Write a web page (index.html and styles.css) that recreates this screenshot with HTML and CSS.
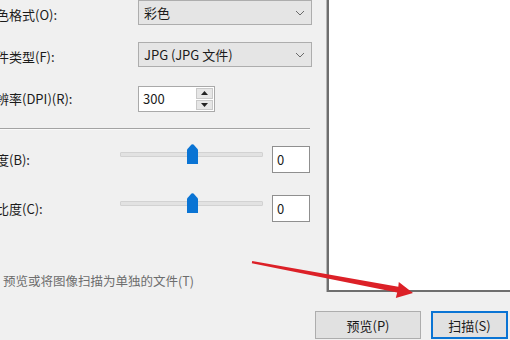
FILE: index.html
```html
<!DOCTYPE html>
<html lang="zh">
<head>
<meta charset="utf-8">
<link rel="stylesheet" href="styles.css">
</head>
<body>
<div class="dialog">
  <div class="top">
    <div class="settings">
      <div class="row r1">
        <span class="label lab-up">颜色格式(O):</span>
        <div class="combo"><span>彩色</span>
          <svg class="chev" width="10" height="6" viewBox="0 0 10 6"><path d="M1 1 L5 5 L9 1" fill="none" stroke="#6a6a6a" stroke-width="1"/></svg>
        </div>
      </div>
      <div class="row r2">
        <span class="label lab-up">文件类型(F):</span>
        <div class="combo"><span>JPG (JPG 文件)</span>
          <svg class="chev" width="10" height="6" viewBox="0 0 10 6"><path d="M1 1 L5 5 L9 1" fill="none" stroke="#6a6a6a" stroke-width="1"/></svg>
        </div>
      </div>
      <div class="row r3">
        <span class="label">分辨率(DPI)(R):</span>
        <div class="spin">
          <span class="spin-val">300</span>
          <div class="spin-btns">
            <div class="spin-btn"><svg width="7" height="4" viewBox="0 0 7 4"><path d="M0 4 L3.5 0 L7 4Z" fill="#222"/></svg></div>
            <div class="spin-btn"><svg width="7" height="4" viewBox="0 0 7 4"><path d="M0 0 L3.5 4 L7 0Z" fill="#222"/></svg></div>
          </div>
        </div>
      </div>
      <div class="sep"></div>
      <div class="row srow s1">
        <span class="label slabel">亮度(B):</span>
        <div class="slider">
          <div class="track"></div>
          <svg class="thumb" width="11" height="20" viewBox="0 0 11 20"><path d="M0 5.5 L4.5 0.6 Q5.5 -0.2 6.5 0.6 L11 5.5 L11 20 L0 20 Z" fill="#0a74d4"/></svg>
        </div>
        <div class="edit">0</div>
      </div>
      <div class="row srow s2">
        <span class="label slabel">对比度(C):</span>
        <div class="slider">
          <div class="track"></div>
          <svg class="thumb" width="11" height="20" viewBox="0 0 11 20"><path d="M0 5.5 L4.5 0.6 Q5.5 -0.2 6.5 0.6 L11 5.5 L11 20 L0 20 Z" fill="#0a74d4"/></svg>
        </div>
        <div class="edit">0</div>
      </div>
      <div class="check">预览或将图像扫描为单独的文件(T)</div>
    </div>
    <div class="preview"></div>
  </div>
  <div class="bottom">
    <button class="btn btn-preview">预览(P)</button>
    <button class="btn btn-scan">扫描(S)</button>
  </div>
  <svg class="arrow" width="510" height="340" viewBox="0 0 510 340">
    <polygon points="251.8,263.2 252.2,261.0 398.3,286.8 398.8,282.1 413,293 395.8,297.9 397.2,292.6" fill="#dc2027"/>
  </svg>
</div>
</body>
</html>
```

FILE: styles.css
```css
html, body {
  margin: 0;
  padding: 0;
  width: 510px;
  height: 340px;
  overflow: hidden;
  background: #f0f0f0;
}

.dialog {
  position: relative;
  width: 510px;
  height: 340px;
  display: grid;
  grid-template-rows: 292px 48px;
  font-family: "Noto Sans CJK SC", "Noto Sans", sans-serif;
  font-size: 13px;
  line-height: 18px;
  color: #1b1b1b;
}

.top {
  display: flex;
  height: 292px;
}

.settings {
  width: 327px;
  flex: none;
  display: flex;
  flex-direction: column;
}

.row {
  display: flex;
  align-items: center;
}

.label {
  width: 155px;
  margin-left: -17px;
  flex: none;
  white-space: nowrap;
}

.lab-up {
  padding-top: 4px;
}

.r1 { height: 25px; }
.r2 { height: 25px; margin-top: 17px; }
.r3 { height: 26px; margin-top: 19px; }

.combo {
  box-sizing: border-box;
  width: 174px;
  height: 25px;
  background: #e5e5e5;
  border: 1px solid #adadad;
  display: flex;
  align-items: center;
  justify-content: space-between;
  padding: 0 6px 0 5px;
}

.spin {
  box-sizing: border-box;
  width: 77px;
  height: 26px;
  background: #fff;
  border: 1px solid #a9a9a9;
  display: flex;
}

.spin-val {
  flex: 1;
  padding-left: 4px;
  line-height: 24px;
}

.spin-btns {
  width: 17px;
  display: flex;
  flex-direction: column;
  gap: 1px;
  padding: 1px;
}

.spin-btn {
  flex: 1;
  background: #e6e6e6;
  border: 1px solid #c9c9c9;
  display: flex;
  align-items: center;
  justify-content: center;
}

.sep {
  width: 310px;
  height: 1px;
  background: #a3a3a3;
  margin-top: 16px;
  box-shadow: 0 1px 0 #fafafa;
}

.srow { height: 27px; }
.s1 { margin-top: 17px; }
.s2 { margin-top: 22px; }

.slabel {
  width: 137px;
  padding-top: 1px;
}

.slider {
  position: relative;
  width: 143px;
  height: 27px;
  flex: none;
}

.track {
  position: absolute;
  left: 0;
  right: 0;
  top: 6px;
  height: 3px;
  background: #e2e2e2;
  border: 1px solid #d2d2d2;
  border-radius: 1px;
}

.thumb {
  position: absolute;
  left: 67px;
  top: -2px;
}

.edit {
  box-sizing: border-box;
  margin-left: 9px;
  width: 38px;
  height: 27px;
  background: #fff;
  border: 1px solid #8f8f8f;
  padding-left: 4px;
  line-height: 25px;
}

.check {
  margin-top: 50px;
  margin-left: 3px;
  font-size: 12.5px;
  color: #6d6d6d;
  white-space: nowrap;
}

.preview {
  flex: 1;
  background: #fff;
  border-left: 2px solid #6e6e6e;
  border-bottom: 2px solid #6e6e6e;
  box-shadow: -1px 0 0 #b5b5b5;
}

.bottom {
  display: flex;
  justify-content: flex-end;
  align-items: flex-start;
  gap: 10px;
  padding-top: 19px;
  padding-right: 2px;
}

.btn {
  box-sizing: border-box;
  height: 28px;
  font-family: inherit;
  font-size: 13px;
  color: #1b1b1b;
  background: #e1e1e1;
  border: 1px solid #adadad;
  margin: 0;
  padding: 0;
}

.btn-preview { width: 106px; }

.btn-scan {
  width: 77px;
  border: 2px solid #0a74d4;
}

.arrow {
  position: absolute;
  left: 0;
  top: 0;
  pointer-events: none;
}
```
